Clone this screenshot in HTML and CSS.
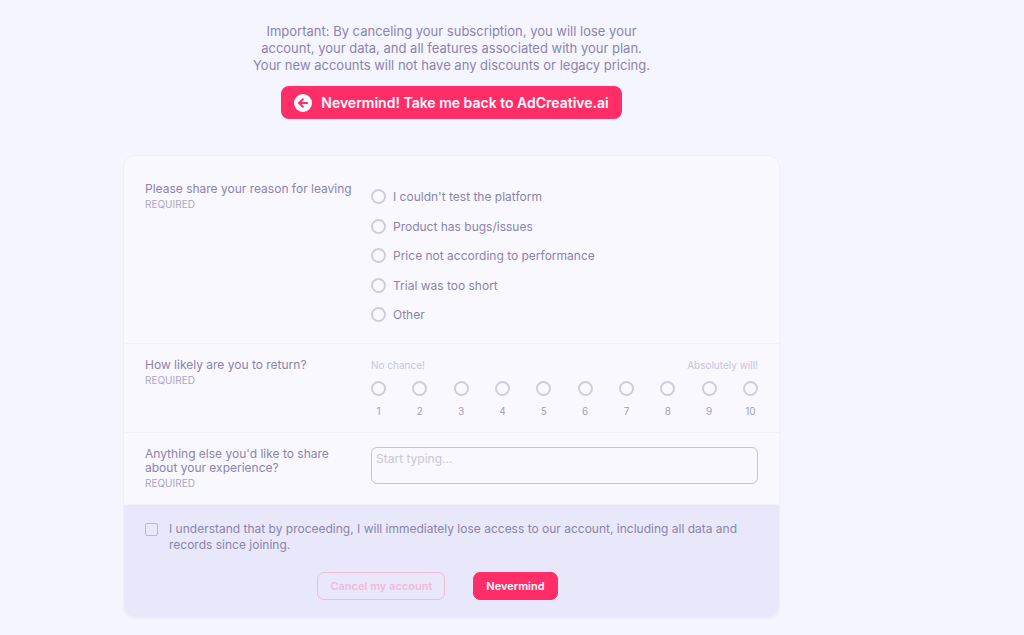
FILE: index.html
```html
<!DOCTYPE html>
<html lang="en">
<head>
    <meta charset="UTF-8">
    <meta name="viewport" content="width=device-width, initial-scale=1.0">
    <title>Cancel Subscription | AdCreative.ai</title>
    <link rel="stylesheet" href="styles.css">
</head>
<body>
    <main class="page">
        <p class="intro">
            Important: By canceling your subscription, you will lose your<br>
            account, your data, and all features associated with your plan.<br>
            Your new accounts will not have any discounts or legacy pricing.
        </p>

        <a href="#" class="back-btn">
            <svg class="back-icon" viewBox="0 0 18 18" aria-hidden="true">
                <circle cx="9" cy="9" r="9" fill="#fff"/>
                <path d="M13.2 9H5.2M8.9 5.2L5 9l3.9 3.8" fill="none" stroke="#ff2e68" stroke-width="1.9" stroke-linecap="round" stroke-linejoin="round"/>
            </svg>
            Nevermind! Take me back to AdCreative.ai
        </a>

        <form class="card">
            <!-- Reason -->
            <div class="question question-first">
                <div class="question-label">
                    <div class="question-title" id="reasonTitle">Please share your reason for leaving</div>
                    <div class="required">REQUIRED</div>
                </div>
                <div class="options" role="radiogroup" aria-labelledby="reasonTitle">
                    <label class="option"><input type="radio" name="reason" value="test"> I couldn't test the platform</label>
                    <label class="option"><input type="radio" name="reason" value="bugs"> Product has bugs/issues</label>
                    <label class="option"><input type="radio" name="reason" value="price"> Price not according to performance</label>
                    <label class="option"><input type="radio" name="reason" value="trial"> Trial was too short</label>
                    <label class="option"><input type="radio" name="reason" value="other"> Other</label>
                </div>
            </div>

            <!-- Likelihood -->
            <div class="question">
                <div class="question-label">
                    <div class="question-title" id="returnTitle">How likely are you to return?</div>
                    <div class="required">REQUIRED</div>
                </div>
                <div>
                    <div class="scale-ends">
                        <span>No chance!</span>
                        <span>Absolutely will!</span>
                    </div>
                    <div class="scale" role="radiogroup" aria-labelledby="returnTitle">
                        <label><input type="radio" name="return" value="1">1</label>
                        <label><input type="radio" name="return" value="2">2</label>
                        <label><input type="radio" name="return" value="3">3</label>
                        <label><input type="radio" name="return" value="4">4</label>
                        <label><input type="radio" name="return" value="5">5</label>
                        <label><input type="radio" name="return" value="6">6</label>
                        <label><input type="radio" name="return" value="7">7</label>
                        <label><input type="radio" name="return" value="8">8</label>
                        <label><input type="radio" name="return" value="9">9</label>
                        <label><input type="radio" name="return" value="10">10</label>
                    </div>
                </div>
            </div>

            <!-- Comments -->
            <div class="question">
                <div class="question-label">
                    <label class="question-title" for="comments">Anything else you'd like to share about your experience?</label>
                    <div class="required">REQUIRED</div>
                </div>
                <textarea id="comments" name="comments" placeholder="Start typing..."></textarea>
            </div>

            <div class="confirm">
                <label class="confirm-label">
                    <input type="checkbox" name="understand">
                    <span>I understand that by proceeding, I will immediately lose access to our account, including all data and records since joining.</span>
                </label>
                <div class="actions">
                    <button type="submit" class="btn btn-outline">Cancel my account</button>
                    <button type="button" class="btn btn-primary">Nevermind</button>
                </div>
            </div>
        </form>
    </main>
</body>
</html>
```
FILE: styles.css
```css
* {
    margin: 0;
    padding: 0;
    box-sizing: border-box;
    font-family: Inter, 'Open Sans', sans-serif;
}

body {
    background: #f5f5ff;
    color: #8a84ab;
    font-size: 12px;
}

.page {
    display: flex;
    flex-direction: column;
    align-items: center;
    padding: 23px 244px 16px 123px;
}

.intro {
    font-size: 13px;
    line-height: 17px;
    text-align: center;
    white-space: nowrap;
}

.back-btn {
    display: flex;
    align-items: center;
    gap: 9px;
    height: 33px;
    margin-top: 12px;
    padding: 0 13px;
    border-radius: 8px;
    background: #ff2e68;
    color: #fff;
    font-size: 14px;
    font-weight: 600;
    text-decoration: none;
    white-space: nowrap;
}

.back-icon {
    width: 18px;
    height: 18px;
}

.card {
    width: 100%;
    margin-top: 36px;
    border: 1px solid #efeff8;
    border-radius: 12px;
    background: #f9f8ff;
    overflow: hidden;
    box-shadow: 0 1px 1px rgba(80, 70, 120, 0.05);
}

.question {
    display: grid;
    grid-template-columns: 214px 1fr;
    gap: 12px;
    padding: 14px 21px;
    border-bottom: 1px solid #f2f1f8;
}

.question-first {
    padding-top: 26px;
    padding-bottom: 21px;
}

.question-title {
    display: block;
    line-height: 14px;
}

.required {
    margin-top: 1px;
    color: #aaa5c4;
    font-size: 10px;
    line-height: 14px;
}

/* Radios and checkbox */
input[type="radio"],
input[type="checkbox"] {
    appearance: none;
    flex-shrink: 0;
    border: 2px solid #d0cce0;
}

input[type="radio"] {
    width: 15px;
    height: 15px;
    border-radius: 50%;
}

input[type="radio"]:checked {
    background: #ff2e68;
    box-shadow: inset 0 0 0 2px #f9f8ff;
}

input[type="checkbox"] {
    width: 13px;
    height: 13px;
    margin-top: 2px;
    border-width: 1px;
    border-color: #bdb5d6;
    border-radius: 2px;
}

input[type="checkbox"]:checked {
    background: #ff2e68;
}

.options {
    display: flex;
    flex-direction: column;
    justify-content: space-between;
    min-height: 133px;
    margin-top: 7px;
}

.option {
    display: flex;
    align-items: center;
    gap: 7px;
    line-height: 15px;
}

.scale-ends {
    display: flex;
    justify-content: space-between;
    color: #c8c4da;
    font-size: 10px;
    line-height: 14px;
}

.scale {
    display: flex;
    justify-content: space-between;
    margin-top: 9px;
}

.scale label {
    display: flex;
    flex-direction: column;
    align-items: center;
    gap: 8px;
    width: 15px;
    color: #a39ebb;
    font-size: 10px;
    line-height: 14px;
}

textarea {
    display: block;
    width: 100%;
    height: 37px;
    padding: 4px;
    border: 1px solid #c6c1da;
    border-radius: 6px;
    background: transparent;
    color: #8a84ab;
    font-size: 12px;
    line-height: 14px;
    resize: none;
}

textarea::placeholder {
    color: #c9c7d1;
}

.confirm {
    padding: 16px 21px 17px;
    background: #e8e8fa;
}

.confirm-label {
    display: flex;
    gap: 11px;
    line-height: 16px;
}

.actions {
    display: flex;
    justify-content: center;
    gap: 28px;
    margin-top: 19px;
    padding-right: 28px;
}

.btn {
    height: 28px;
    padding: 0 12px;
    border: 1px solid #ff2e68;
    border-radius: 7px;
    font-size: 11px;
    font-weight: 600;
    cursor: pointer;
}

.btn-outline {
    border-color: #f3b9d7;
    background: transparent;
    color: #f3b9d7;
}

.btn-primary {
    background: #ff2e68;
    color: #fff;
}

@media (max-width: 900px) {
    .page {
        padding-left: 16px;
        padding-right: 16px;
    }

    .intro {
        white-space: normal;
    }
}
```
